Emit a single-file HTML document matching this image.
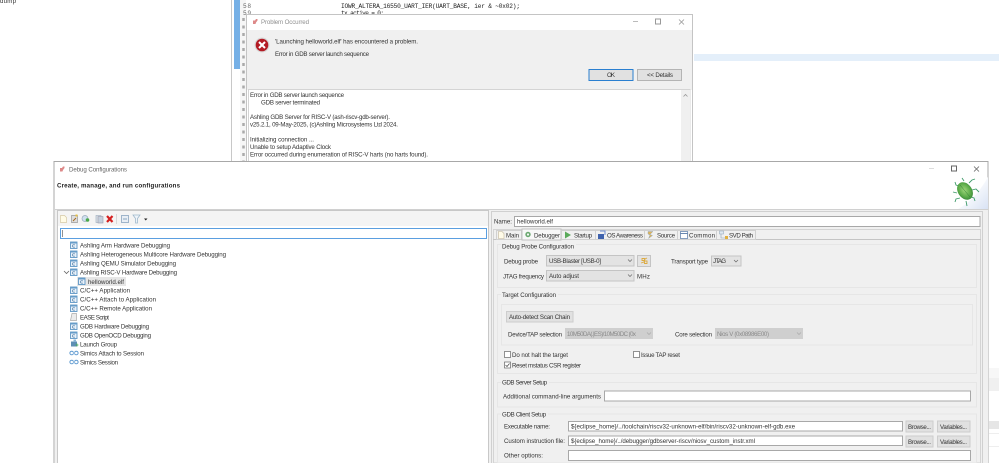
<!DOCTYPE html>
<html><head><meta charset="utf-8"><title>Debug Configurations</title>
<style>
html,body{margin:0;padding:0;background:#fff;width:999px;height:463px;overflow:hidden}
svg{display:block;filter:blur(.35px)}
text{font-family:"Liberation Sans",sans-serif;font-size:6.15px;fill:#333}
.m{font-family:"Liberation Mono",monospace;fill:#222}
.g{fill:#8f8f8f}
.t{fill:#666}
.d{fill:#8a8a8a}
</style></head><body>
<svg width="999" height="463" viewBox="0 0 999 463" xmlns="http://www.w3.org/2000/svg">
<defs>
<g id="c"><rect x=".5" y="1" width="6.500" height="6.500" fill="#e9f1f9" stroke="#5f97c6" stroke-width=".9"/><rect x="1" y="1.500" width="5.500" height="1" fill="#5f97c6"/><path d="M4.900 3.900Q2.400 3.300 2.400 4.900T4.900 6.100" fill="none" stroke="#4f7fa8" stroke-width=".7"/></g>
<g id="s"><circle cx="2.200" cy="4" r="1.800" fill="none" stroke="#5f9ad0"/><circle cx="6.800" cy="4" r="1.800" fill="none" stroke="#5f9ad0"/><rect x="3.500" y="3.200" width="2" height="1.600" fill="#9cc3e4"/></g>
<linearGradient id="cg" x1="0" y1="0" x2="1" y2="1"><stop offset=".35" stop-color="#fff"/><stop offset="1" stop-color="#d8e2f4"/></linearGradient>
<radialGradient id="bug" cx=".5" cy=".45" r=".65"><stop offset="0" stop-color="#9ed67a"/><stop offset=".6" stop-color="#5aaa48"/><stop offset="1" stop-color="#2a7a35"/></radialGradient>
</defs>

<rect width="999" height="463" fill="#fff"/>

<!-- background -->
<text x="0" y="3" textLength="16">dump</text>
<rect x="231" y="0" width="1" height="161" fill="#c8c8c8"/>
<rect x="234" y="0" width="6" height="69" fill="#76b0e6"/>
<rect x="240" y="0" width="6" height="161" fill="#f6f6f6"/>
<path d="M243.500 18V161" stroke="#aaa" stroke-width="2.500" stroke-dasharray="3 4.500" fill="none"/>
<text class="m t" x="243" y="8" textLength="8">58</text>
<text class="m t" x="243" y="15" textLength="8">59</text>
<text class="m" x="341" y="8" textLength="179">IOWR_ALTERA_16550_UART_IER(UART_BASE, ier &amp; ~0x02);</text>
<text class="m" x="341" y="15" textLength="43">tx_active = 0;</text>
<rect x="694" y="54" width="305" height="7" fill="#e4effa"/>
<rect x="989" y="368" width="10" height="10" fill="#f7f7f7"/>
<rect x="989" y="378" width="10" height="13" fill="#f0f0f0"/>
<rect x="989" y="421" width="10" height="8" fill="#e6e6e6"/>
<rect x="989" y="433" width="10" height="1" fill="#eee"/>
<rect x="989" y="446" width="10" height="1" fill="#eee"/>

<!-- problem dialog -->
<rect x="246.500" y="14.500" width="446" height="150" fill="#fff" stroke="#c4c4c4"/>
<rect x="247" y="30" width="445" height="60" fill="#f0f0f0"/>
<path d="M253 24v-3.500h2l1-1.500h1.500v1.500l-1.500 2-.5 1.500z" fill="#d88"/>
<text class="g" x="261" y="24" textLength="48">Problem Occurred</text>
<path d="M633 21.500h5" stroke="#bbb" fill="none"/>
<rect x="655.500" y="19" width="5" height="5" fill="none" stroke="#999"/>
<path d="M679 19.500l5 5m0-5l-5 5" stroke="#999" fill="none" stroke-width=".8"/>
<circle cx="262" cy="45" r="7.500" fill="#d8d8d8"/>
<circle cx="262" cy="45" r="6.300" fill="#b31b24"/>
<path d="M259 42l6 6m0-6l-6 6" stroke="#fff" stroke-width="2" fill="none"/>
<text x="275" y="43.300" textLength="143">'Launching helloworld.elf' has encountered a problem.</text>
<text x="275" y="55.800" textLength="94">Error in GDB server launch sequence</text>
<rect x="589" y="69.500" width="44" height="11" fill="#e1e1e1" stroke="#2a7fd0"/>
<text x="607" y="77.200" textLength="8">OK</text>
<rect x="637.500" y="69.500" width="44" height="11" fill="#e1e1e1" stroke="#b4b4b4"/>
<text x="647" y="77.200" textLength="26">&lt;&lt; Details</text>
<rect x="248.500" y="89.500" width="441.500" height="75" fill="#fff" stroke="#d4d4d4"/>
<rect x="681" y="90" width="9" height="71" fill="#f0f0f0"/>
<path d="M683.500 96.500l2-2 2 2" fill="none" stroke="#999" stroke-width=".8"/>
<text x="250" y="97" textLength="94">Error in GDB server launch sequence</text>
<text x="261" y="104.500" textLength="59">GDB server terminated</text>
<text x="250" y="119" textLength="140">Ashling GDB Server for RISC-V (ash-riscv-gdb-server).</text>
<text x="250" y="126.500" textLength="148">v25.2.1, 09-May-2025, (c)Ashling Microsystems Ltd 2024.</text>
<text x="250" y="141.500" textLength="64">Initializing connection ...</text>
<text x="250" y="149" textLength="81">Unable to setup Adaptive Clock</text>
<text x="250" y="156.500" textLength="178">Error occurred during enumeration of RISC-V harts (no harts found).</text>

<!-- debug window -->
<rect x="54" y="161.500" width="934" height="302" fill="#fff" stroke="#a8a8a8"/>
<path d="M60 171.500v-3.500h2l1-1.500h1.500v1.500l-1.500 2-.5 1.500z" fill="#d88"/>
<text class="t" x="69" y="171.300" textLength="58">Debug Configurations</text>
<text x="57" y="187.500" textLength="123" style="font-weight:700;fill:#222">Create, manage, and run configurations</text>
<path d="M929 168.500h5" stroke="#ddd" fill="none"/>
<rect x="951.500" y="166" width="5" height="5" fill="none" stroke="#666"/>
<path d="M974 166.500l5 5m0-5l-5 5" stroke="#666" fill="none" stroke-width=".8"/>
<path d="M988 177V209H958Q975 200 988 177z" fill="url(#cg)"/>
<g stroke="#3f9a6a" stroke-width=".9" fill="none">
<path d="M959 186l-3-1-1-3M957 193l-4-1M960 198l-4 1-1 3M964 181l-2-3M969 183l3-3 3-1M972 190l4-1 3 3M971 197l3 1 1 3M966 201l1 5"/>
</g>
<ellipse cx="965" cy="191" rx="7" ry="9.500" transform="rotate(-35 965 191)" fill="url(#bug)"/>
<path d="M960 185l10 12" stroke="#2f7f35" stroke-width=".5" fill="none"/>
<rect x="55" y="209" width="933" height="254" fill="#f0f0f0"/>
<rect x="55" y="209" width="933" height="1" fill="#d0d0d0"/>

<!-- left panel -->
<rect x="57.500" y="210.500" width="431" height="253" fill="#fff" stroke="#c8c8c8"/>
<rect x="58" y="211" width="430" height="15" fill="#f4f4f4"/>
<path d="M60.500 215.500h4l2 2v5h-6z" fill="#fffbe6" stroke="#d5c9a5" stroke-width=".7"/>
<path d="M71.500 215.500h6v7h-6z" fill="#ddd" stroke="#999" stroke-width=".7"/><path d="M73 221l3-3" stroke="#a56a20"/><rect x="75.500" y="214.500" width="2" height="2" fill="#e8c040"/>
<circle cx="85" cy="218.500" r="3" fill="#cfe0ee" stroke="#9ab" stroke-width=".7"/><circle cx="87.500" cy="220" r="1.800" fill="#4aa84a"/>
<rect x="96" y="215.500" width="5" height="7" fill="#dde2e8" stroke="#9ab" stroke-width=".6"/><rect x="98" y="216.500" width="5" height="6.500" fill="#c5d0dd" stroke="#99a" stroke-width=".6"/>
<path d="M107 216l5.500 6m0-6l-5.500 6" stroke="#d42020" stroke-width="2.200" fill="none"/>
<rect x="116" y="214" width="1" height="10" fill="#d8d8d8"/>
<rect x="121.500" y="215.500" width="7" height="7" fill="#e8eef5" stroke="#8aa6c0" stroke-width=".8"/><path d="M123 219h4" stroke="#8aa6c0"/>
<path d="M133 215h7l-2.500 3.500v4.500h-2v-4.500z" fill="#eef4fa" stroke="#a0b8cc" stroke-width=".8"/>
<path d="M144 218.500h3.500l-1.750 2z" fill="#222"/>
<rect x="60.500" y="228.500" width="426" height="10" fill="#fff" stroke="#5b9fe0"/>
<rect x="62" y="230" width=".8" height="7" fill="#777"/>

<use href="#c" x="70" y="241"/><text x="80" y="247.300" textLength="90">Ashling Arm Hardware Debugging</text>
<use href="#c" x="70" y="250"/><text x="80" y="256.300" textLength="146">Ashling Heterogeneous Multicore Hardware Debugging</text>
<use href="#c" x="70" y="259"/><text x="80" y="265.300" textLength="96">Ashling QEMU Simulator Debugging</text>
<path d="M64 271l2.500 2.500 2.500-2.500" fill="none" stroke="#666" stroke-width=".8"/>
<use href="#c" x="70" y="268"/><text x="80" y="274.300" textLength="97">Ashling RISC-V Hardware Debugging</text>
<rect x="77" y="277" width="49" height="9" fill="#e6e6e6"/>
<use href="#c" x="78" y="277"/><text x="88" y="283.800" textLength="36">helloworld.elf</text>
<use href="#c" x="70" y="286"/><text x="80" y="292.300" textLength="50">C/C++ Application</text>
<use href="#c" x="70" y="295"/><text x="80" y="301.500" textLength="76">C/C++ Attach to Application</text>
<use href="#c" x="70" y="304"/><text x="80" y="310.500" textLength="72">C/C++ Remote Application</text>
<path d="M72 313.500h4.500v7h-6z" fill="#ececec" stroke="#aaa" stroke-width=".7"/>
<text x="80" y="319.300" textLength="29">EASE Script</text>
<use href="#c" x="70" y="322"/><text x="80" y="328.300" textLength="69">GDB Hardware Debugging</text>
<use href="#c" x="70" y="331"/><text x="80" y="337.300" textLength="71">GDB OpenOCD Debugging</text>
<rect x="71" y="341.500" width="6" height="5" fill="#5f8fb5"/><rect x="73.500" y="339.500" width="2.500" height="2.500" fill="#8ab4d4"/><path d="M75.500 345h3M77 343.500v3" stroke="#4aa85a" stroke-width=".8"/>
<text x="80" y="346.300" textLength="37">Launch Group</text>
<use href="#s" x="69.500" y="349"/><text x="80" y="355.300" textLength="64">Simics Attach to Session</text>
<use href="#s" x="69.500" y="358"/><text x="80" y="364.300" textLength="38">Simics Session</text>

<!-- right panel -->
<rect x="491.500" y="211.500" width="491" height="252" fill="#f0f0f0" stroke="#d0d0d0"/>
<text x="494" y="223.300" textLength="18">Name:</text>
<rect x="514.500" y="216.500" width="465.500" height="10" fill="#fff" stroke="#a8a8a8"/>
<text x="517" y="223.300" textLength="36">helloworld.elf</text>

<rect x="493.500" y="229.500" width="487" height="233.500" fill="#f0f0f0" stroke="#d4d4d4"/>
<path d="M493 239.500H981" stroke="#c4c4c4" fill="none"/>
<rect x="496.500" y="230.500" width="25" height="9" fill="#f0f0f0" stroke="#d0d0d0"/>
<rect x="522" y="229" width="39" height="11" fill="#f8f8f8" stroke="#c0c0c0"/>
<rect x="561.500" y="230.500" width="34" height="9" fill="#f0f0f0" stroke="#d0d0d0"/>
<rect x="595.500" y="230.500" width="49" height="9" fill="#f0f0f0" stroke="#d0d0d0"/>
<rect x="644.500" y="230.500" width="33" height="9" fill="#f0f0f0" stroke="#d0d0d0"/>
<rect x="677.500" y="230.500" width="39" height="9" fill="#f0f0f0" stroke="#d0d0d0"/>
<rect x="716.500" y="230.500" width="39" height="9" fill="#f0f0f0" stroke="#d0d0d0"/>
<path d="M498.500 231.500h3.500l2 2v5h-5.500z" fill="#fffbe8" stroke="#c0b498" stroke-width=".6"/>
<circle cx="528" cy="234.500" r="2.700" fill="#6aa870"/><circle cx="528" cy="234.500" r="1.100" fill="#f8f8f8"/>
<path d="M565 231.500l6 3.500-6 3.500z" fill="#5aaa5a"/>
<rect x="598" y="234" width="6" height="5" fill="#3f62ad"/><path d="M600 231h5v4" stroke="#6a8ad0" fill="none"/>
<path d="M648 231.500h5l-3 3 2.500 1-4 3 1.500-3.500-2-1z" fill="#dcb45a" stroke="#86a0c0" stroke-width=".4"/>
<rect x="680.500" y="231.500" width="7" height="7" fill="#fff" stroke="#6a88b0" stroke-width=".8"/><path d="M680 233.500h8" stroke="#6a88b0"/>
<rect x="719.500" y="231" width="4" height="3" fill="#dfe8f0" stroke="#8aa0b4" stroke-width=".5"/><path d="M721 234v4h5" stroke="#8aa0b4" stroke-width=".6" fill="none"/><rect x="725" y="236" width="3" height="3" fill="#e0b040"/>
<text x="506" y="237.300" textLength="13">Main</text>
<text x="534" y="237.300" textLength="26">Debugger</text>
<text x="574" y="237.300" textLength="18">Startup</text>
<text x="607" y="237.300" textLength="36">OS Awareness</text>
<text x="657" y="237.300" textLength="18">Source</text>
<text x="689" y="237.300" textLength="26">Common</text>
<text x="729" y="237.300" textLength="24">SVD Path</text>

<!-- groups -->
<g fill="none" stroke="#e6e6e6">
<rect x="497.500" y="244.500" width="479" height="43"/>
<rect x="497.500" y="294.500" width="479" height="79"/>
<rect x="501.500" y="304.500" width="471" height="40.500"/>
<rect x="497.500" y="382.500" width="479" height="24.500"/>
<rect x="497.500" y="414" width="479" height="49"/>
</g>
<rect x="501" y="242" width="75" height="7" fill="#f0f0f0"/><text x="502" y="248.300" textLength="72">Debug Probe Configuration</text>
<rect x="501" y="292" width="57" height="7" fill="#f0f0f0"/><text x="502" y="296.800" textLength="54">Target Configuration</text>
<rect x="501" y="380" width="48" height="7" fill="#f0f0f0"/><text x="502" y="384.300" textLength="45">GDB Server Setup</text>
<rect x="501" y="411" width="47" height="7" fill="#f0f0f0"/><text x="502" y="416.300" textLength="44">GDB Client Setup</text>

<!-- probe -->
<text x="504" y="263.300" textLength="34">Debug probe</text>
<rect x="546.500" y="255.500" width="87.500" height="10.500" fill="#e3e3e3" stroke="#c4c4c4"/>
<text x="549" y="263" textLength="52">USB-Blaster [USB-0]</text>
<path d="M628 259.500l2 2 2-2" fill="none" stroke="#666" stroke-width=".7"/>
<rect x="637.500" y="255.500" width="13" height="11" fill="#e3e3e3" stroke="#c4c4c4"/>
<path d="M641 263l3-1 1-3 2-1M642 258.500h2.500v2h-2.500zM644.500 261h2.500v2.500h-2.500z" fill="none" stroke="#dcaa40" stroke-width=".9"/>
<text x="671" y="263.300" textLength="37">Transport type</text>
<rect x="711.500" y="256" width="29.500" height="10" fill="#e3e3e3" stroke="#c4c4c4"/>
<text x="713" y="263" textLength="13">JTAG</text>
<path d="M734 260l2 2 2-2" fill="none" stroke="#666" stroke-width=".7"/>
<text x="503" y="278.300" textLength="41">JTAG frequency</text>
<rect x="546.500" y="270.500" width="87.500" height="10.500" fill="#e3e3e3" stroke="#c4c4c4"/>
<text x="549" y="278" textLength="30">Auto adjust</text>
<path d="M628 274.500l2 2 2-2" fill="none" stroke="#666" stroke-width=".7"/>
<text x="637" y="278.300" textLength="13">MHz</text>

<!-- target -->
<rect x="506.500" y="311.500" width="66.500" height="10.500" fill="#e1e1e1" stroke="#cdcdcd"/>
<text x="509" y="319" textLength="61">Auto-detect Scan Chain</text>
<text x="508" y="336.300" textLength="54">Device/TAP selection</text>
<rect x="565" y="328" width="88" height="11" fill="#cfcfcf"/>
<text class="d" x="567" y="336" textLength="69">10M50DA(.|ES)/10M50DC (0x</text>
<path d="M647 332.500l2 2 2-2" fill="none" stroke="#aaa" stroke-width=".7"/>
<text x="675" y="336.300" textLength="37">Core selection</text>
<rect x="715" y="328" width="88" height="11" fill="#cfcfcf"/>
<text class="d" x="717" y="336" textLength="52">Nios V (0x08986E00)</text>
<path d="M797 332.500l2 2 2-2" fill="none" stroke="#aaa" stroke-width=".7"/>

<rect x="504.500" y="351.500" width="6" height="6" fill="#fff" stroke="#666" stroke-width=".7"/>
<text x="512" y="356.800" textLength="56">Do not halt the target</text>
<rect x="633.500" y="351.500" width="6" height="6" fill="#fff" stroke="#666" stroke-width=".7"/>
<text x="641" y="356.800" textLength="39">Issue TAP reset</text>
<rect x="504.500" y="362" width="6" height="6" fill="#fff" stroke="#666" stroke-width=".7"/>
<path d="M505.500 365l1.500 1.500 2.500-3" fill="none" stroke="#555" stroke-width=".8"/>
<text x="512" y="367.300" textLength="69">Reset mstatus CSR register</text>

<!-- server -->
<text x="503" y="398.300" textLength="98">Additional command-line arguments</text>
<rect x="604.500" y="391" width="366" height="10" fill="#fff" stroke="#a8a8a8"/>

<!-- client -->
<text x="504" y="428.300" textLength="46">Executable name:</text>
<rect x="568.500" y="421.500" width="334" height="9.500" fill="#fff" stroke="#a8a8a8"/>
<text x="571" y="428.500" textLength="224">${eclipse_home}/../toolchain/riscv32-unknown-elf/bin/riscv32-unknown-elf-gdb.exe</text>
<rect x="906" y="421" width="27" height="11" fill="#e1e1e1" stroke="#cdcdcd"/>
<text x="908" y="429" textLength="23">Browse...</text>
<rect x="937.500" y="421" width="32.500" height="11" fill="#e1e1e1" stroke="#cdcdcd"/>
<text x="940" y="429" textLength="27">Variables...</text>
<text x="504" y="443" textLength="61">Custom instruction file:</text>
<rect x="568.500" y="436" width="334" height="9.500" fill="#fff" stroke="#a8a8a8"/>
<text x="571" y="443" textLength="184">${eclipse_home}/../debugger/gdbserver-riscv/niosv_custom_instr.xml</text>
<rect x="906" y="436" width="27" height="11" fill="#e1e1e1" stroke="#cdcdcd"/>
<text x="908" y="443.800" textLength="23">Browse...</text>
<rect x="937.500" y="436" width="32.500" height="11" fill="#e1e1e1" stroke="#cdcdcd"/>
<text x="940" y="443.800" textLength="27">Variables...</text>
<text x="504" y="457.300" textLength="39">Other options:</text>
<rect x="568.500" y="450.500" width="402" height="10" fill="#fff" stroke="#a8a8a8"/>
</svg>
</body></html>
